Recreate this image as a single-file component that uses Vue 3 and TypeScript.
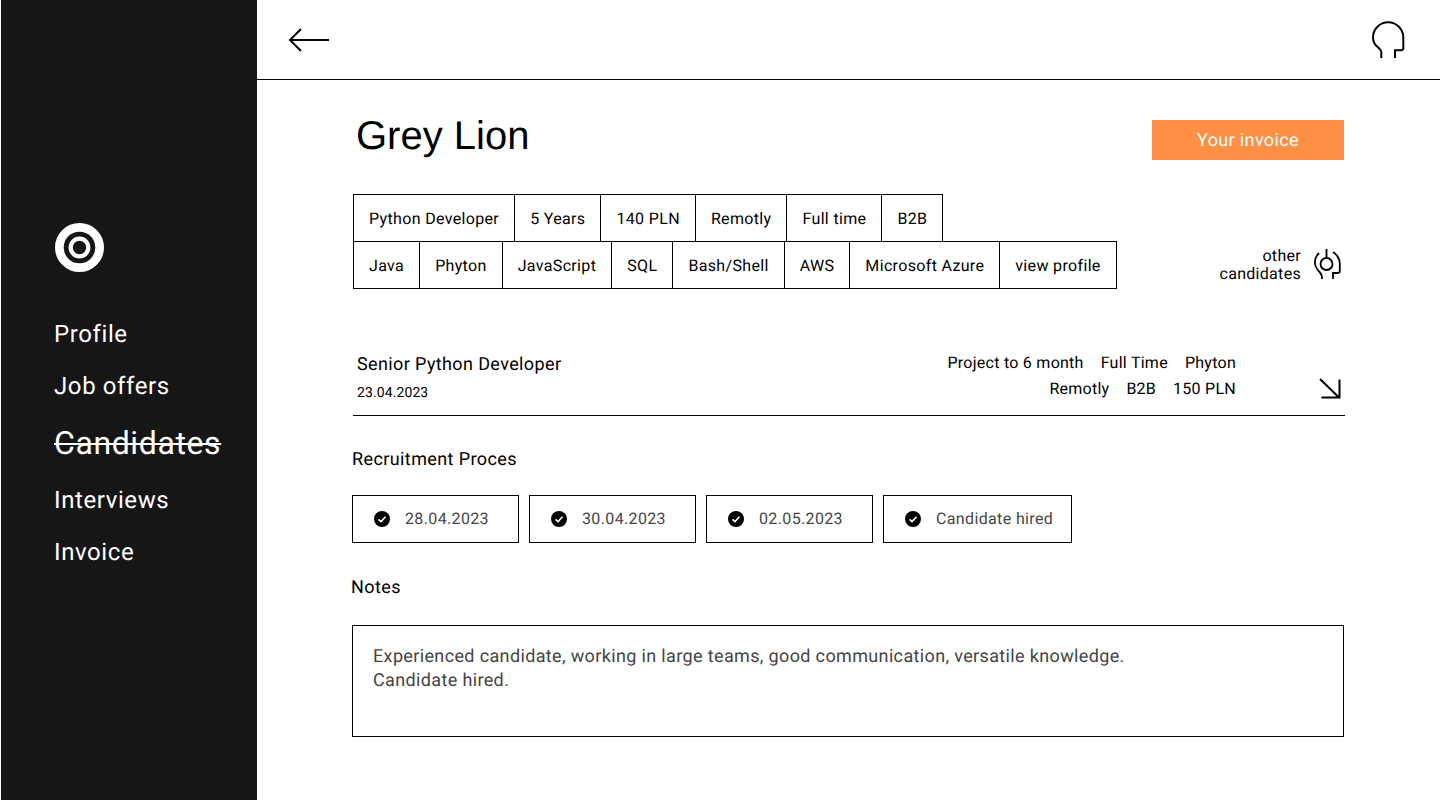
<script setup lang="ts">
const nav = [
  { label: 'Profile', active: false },
  { label: 'Job offers', active: false },
  { label: 'Candidates', active: true },
  { label: 'Interviews', active: false },
  { label: 'Invoice', active: false },
]
const row1 = ['Python Developer', '5 Years', '140 PLN', 'Remotly', 'Full time', 'B2B']
const row2 = ['Java', 'Phyton', 'JavaScript', 'SQL', 'Bash/Shell', 'AWS', 'Microsoft Azure', 'view profile']
const steps = [
  { label: '28.04.2023', w: 167 },
  { label: '30.04.2023', w: 167 },
  { label: '02.05.2023', w: 167 },
  { label: 'Candidate hired', w: 189 },
]
</script>

<template>
  <div class="page">
    <aside class="sidebar">
      <svg class="logo" width="50" height="50" viewBox="0 0 50 50">
        <circle cx="25.500" cy="24.500" r="24.500" fill="#fff" />
        <circle cx="25.500" cy="24.500" r="15.800" fill="#161616" />
        <circle cx="25.500" cy="24.500" r="8.800" fill="none" stroke="#fff" stroke-width="4.200" />
      </svg>
      <nav class="nav">
        <a v-for="n in nav" :key="n.label" class="nav-item" :class="{ active: n.active }">{{ n.label }}</a>
      </nav>
    </aside>
    <main class="main">
      <header class="topbar">
        <svg width="42" height="26" viewBox="0 0 42 26" fill="none" stroke="#000" stroke-width="2">
          <path d="M41 13H2M13 2 2 13l11 11" />
        </svg>
        <svg width="36" height="42" viewBox="0 0 36 42" fill="none" stroke="#000" stroke-width="2">
          <path d="M10.300 39V33C10.300 31 9 30 7.500 28.800 4.500 26.500 2 23 2 18.500A15.100 15.100 0 0 1 32.300 18.500V29C32.300 30.500 31.500 31.300 30 31.300H24V39" />
        </svg>
      </header>
      <div class="content">
        <div class="title-row">
          <h1 class="title">Grey Lion</h1>
          <button class="invoice">Your invoice</button>
        </div>
        <div class="tags-row">
          <div class="tags">
            <div class="tag-line">
              <span v-for="t in row1" :key="t" class="tag">{{ t }}</span>
            </div>
            <div class="tag-line second">
              <span v-for="t in row2" :key="t" class="tag">{{ t }}</span>
            </div>
          </div>
          <div class="other">
            <span class="other-text">other<br />candidates</span>
            <svg width="28" height="32" viewBox="0 0 28 32" fill="none" stroke="#000" stroke-width="1.800">
              <circle cx="13.500" cy="16" r="6" />
              <path d="M13.500 10V1" />
              <path d="M6 5C3 8 1.500 11.500 2 15.500 2.500 20 4.500 22 7 24.500 8.500 26 9 27 9 31" />
              <path d="M20 4C24.500 7 26.800 11 26.800 16V23C26.800 24.500 25.800 25 24.500 25H20V31" />
            </svg>
          </div>
        </div>
        <section class="job">
          <div class="job-left">
            <div class="job-title">Senior Python Developer</div>
            <div class="job-date">23.04.2023</div>
          </div>
          <div class="job-right">
            <div class="job-meta">
              <div class="meta-line"><span>Project to 6 month</span><span>Full Time</span><span>Phyton</span></div>
              <div class="meta-line"><span>Remotly</span><span>B2B</span><span>150 PLN</span></div>
            </div>
            <svg class="go" width="24" height="22" viewBox="0 0 24 22" fill="none" stroke="#000" stroke-width="2">
              <path d="M2 1 21 19.500M3.500 19.500H21.500V1.500" />
            </svg>
          </div>
        </section>
        <h2 class="label process-label">Recruitment Proces</h2>
        <div class="steps">
          <div v-for="s in steps" :key="s.label" class="step" :style="{ width: s.w + 'px' }">
            <svg width="16" height="16" viewBox="0 0 16 16">
              <circle cx="8" cy="8" r="8" fill="#000" />
              <path d="M4.500 8.300 7 10.600 11.500 5.800" fill="none" stroke="#fff" stroke-width="1.600" />
            </svg>
            <span class="step-text">{{ s.label }}</span>
          </div>
        </div>
        <h2 class="label notes-label">Notes</h2>
        <div class="notes">Experienced candidate, working in large teams, good communication, versatile knowledge.<br />Candidate hired.</div>
      </div>
    </main>
  </div>
</template>

<style>
html, body { margin: 0; background: #fff; }
</style>

<style scoped>
.page {
  display: flex;
  width: 1440px;
  height: 800px;
  overflow: hidden;
  font-family: Roboto, "Liberation Sans", sans-serif;
  color: #000;
  text-rendering: geometricPrecision;
}
.sidebar {
  box-sizing: border-box;
  width: 256px;
  margin-left: 1px;
  padding: 223px 0 0 53px;
  background: #161616;
  flex: none;
}
.logo { display: block; }
.nav {
  display: flex;
  flex-direction: column;
  margin-top: 35px;
}
.nav-item {
  height: 52px;
  line-height: 52px;
  font-size: 24px;
  letter-spacing: 0.6px;
  color: #fff;
}
.nav-item.active {
  height: 62px;
  line-height: 62px;
  font-size: 32px;
  letter-spacing: 0.6px;
  text-decoration: line-through;
  text-decoration-thickness: 2px;
}
.main { flex: 1; min-width: 0; }
.topbar {
  box-sizing: border-box;
  height: 80px;
  border-bottom: 1px solid #000;
  display: flex;
  align-items: flex-start;
  justify-content: space-between;
  padding: 27px 33px 0 31px;
}
.topbar svg:last-child { margin-top: -8px; }
.content { padding: 0 96px 0 95px; }
.title-row {
  display: flex;
  justify-content: space-between;
  align-items: flex-start;
  height: 114px;
  padding-top: 40px;
  box-sizing: border-box;
}
.title {
  margin: -7px 0 0 4px;
  font: 400 40px/46px "Liberation Sans", Arial, sans-serif;
}
.invoice {
  width: 192px;
  height: 40px;
  border: 0;
  padding: 0;
  background: #ff8f44;
  color: #fff;
  font: 400 18px Roboto, sans-serif;
  letter-spacing: 0.360px;
  text-rendering: geometricPrecision;
}
.tags-row { display: flex; justify-content: space-between; align-items: flex-end; }
.tags { margin-left: 1px; }
.tag-line { display: flex; }
.tag-line.second { margin-top: -1px; }
.tag {
  box-sizing: border-box;
  height: 48px;
  padding: 0 15px;
  margin-right: -1px;
  border: 1px solid #000;
  display: flex;
  align-items: center;
  font-size: 16px;
  letter-spacing: 0.340px;
  white-space: nowrap;
}
.other { display: flex; align-items: center; gap: 12px; margin: 0 3px 7px 0; }
.other-text {
  text-align: right;
  font-size: 16px;
  line-height: 18px;
  letter-spacing: 0.300px;
  position: relative;
  top: 1px;
}
.job {
  display: flex;
  justify-content: space-between;
  height: 127px;
  box-sizing: border-box;
  margin-left: 1px;
  margin-right: -1px;
  padding-top: 60px;
  border-bottom: 1px solid #000;
}
.job-left { padding-left: 4px; }
.job-title { font-size: 18px; line-height: 28px; letter-spacing: 0.380px; margin-top: 2px; }
.job-date { font-size: 14px; line-height: 16px; letter-spacing: 0.100px; margin-top: 6px; }
.job-right { display: flex; }
.job-meta { padding-top: 1px; }
.meta-line {
  display: flex;
  justify-content: flex-end;
  gap: 17px;
  font-size: 16px;
  line-height: 26px;
  letter-spacing: 0.260px;
  white-space: nowrap;
}
.go { margin: 29px 3px 0 82px; }
.label { margin: 0; font-weight: 400; font-size: 18px; letter-spacing: 0.400px; line-height: 22px; }
.process-label { margin-top: 33px; }
.steps { display: flex; gap: 10px; margin-top: 24px; }
.step {
  box-sizing: border-box;
  height: 48px;
  border: 1px solid #000;
  display: flex;
  align-items: center;
  gap: 15px;
  padding-left: 21px;
  font-size: 16px;
  letter-spacing: 0.360px;
  color: #444;
}
.step-text { margin-top: -1px; }
.notes-label { margin: 34px 0 0 -1px; }
.notes {
  box-sizing: border-box;
  height: 112px;
  margin-top: 26px;
  border: 1px solid #000;
  padding: 19px 20px 0;
  font-size: 18px;
  line-height: 24px;
  letter-spacing: 0.360px;
  color: #444;
}
</style>
